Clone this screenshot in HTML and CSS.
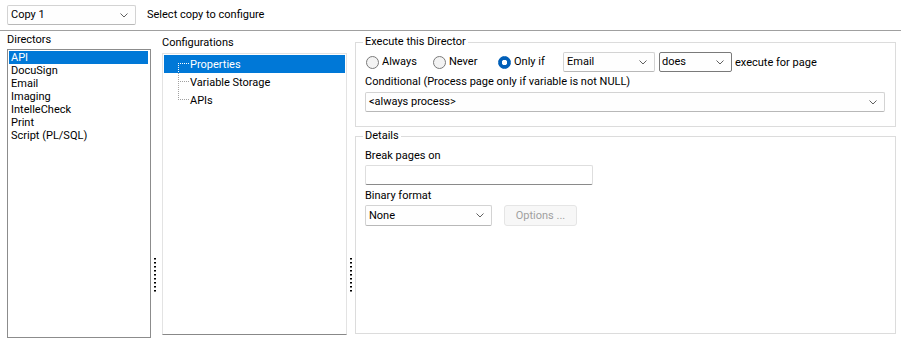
FILE: index.html
```html
<!DOCTYPE html>
<html lang="en">
<head>
    <meta charset="UTF-8">
    <title>Director Configuration</title>
    <link rel="stylesheet" href="styles.css">
</head>
<body>
    <!-- Copy selector -->
    <div class="toolbar">
        <div class="combo combo-copy">
            <span>Copy 1</span>
            <svg class="chevron" width="8" height="5" viewBox="0 0 8 5"><path d="M0.5 0.5 L4 4 L7.5 0.5"/></svg>
        </div>
        <span class="toolbar-label">Select copy to configure</span>
    </div>

    <div class="main">
        <!-- Directors list -->
        <div class="pane directors">
            <div class="pane-title">Directors</div>
            <ul class="listbox">
                <li class="selected">API</li>
                <li>DocuSign</li>
                <li>Email</li>
                <li>Imaging</li>
                <li>IntelleCheck</li>
                <li>Print</li>
                <li>Script (PL/SQL)</li>
            </ul>
        </div>
        <div class="splitter"><div class="grip"></div></div>

        <!-- Configurations tree -->
        <div class="pane configs">
            <div class="pane-title">Configurations</div>
            <ul class="tree">
                <li class="selected"><span class="branch first"></span><span>Properties</span></li>
                <li><span class="branch"></span><span>Variable Storage</span></li>
                <li><span class="branch last"></span><span>APIs</span></li>
            </ul>
        </div>
        <div class="splitter narrow"><div class="grip"></div></div>

        <!-- Settings -->
        <div class="pane settings">
            <fieldset class="group group-exec">
                <legend>Execute this Director</legend>
                <div class="exec-row">
                    <label class="radio"><span class="radio-dot"></span>Always</label>
                    <label class="radio"><span class="radio-dot"></span>Never</label>
                    <label class="radio"><span class="radio-dot checked"></span>Only if</label>
                    <div class="combo combo-var">
                        <span>Email</span>
                        <svg class="chevron" width="8" height="5" viewBox="0 0 8 5"><path d="M0.5 0.5 L4 4 L7.5 0.5"/></svg>
                    </div>
                    <div class="combo combo-does focused">
                        <span>does</span>
                        <svg class="chevron" width="8" height="5" viewBox="0 0 8 5"><path d="M0.5 0.5 L4 4 L7.5 0.5"/></svg>
                    </div>
                    <span class="after-text">execute for page</span>
                </div>
                <div class="field-label">Conditional (Process page only if variable is not NULL)</div>
                <div class="combo combo-wide">
                    <span>&lt;always process&gt;</span>
                    <svg class="chevron" width="8" height="5" viewBox="0 0 8 5"><path d="M0.5 0.5 L4 4 L7.5 0.5"/></svg>
                </div>
            </fieldset>

            <fieldset class="group group-details">
                <legend>Details</legend>
                <div class="field-label first">Break pages on</div>
                <div class="textbox"></div>
                <div class="field-label">Binary format</div>
                <div class="format-row">
                    <div class="combo combo-format">
                        <span>None</span>
                        <svg class="chevron" width="8" height="5" viewBox="0 0 8 5"><path d="M0.5 0.5 L4 4 L7.5 0.5"/></svg>
                    </div>
                    <button class="btn" disabled>Options ...</button>
                </div>
            </fieldset>
        </div>
    </div>
</body>
</html>
```

FILE: styles.css
```css
body {
    margin: 0;
    font-family: Roboto, "Noto Sans", sans-serif;
    font-size: 11px;
    color: #000;
    background-color: #fff;
    width: 901px;
    height: 341px;
    overflow: hidden;
}
ul {
    list-style: none;
    margin: 0;
    padding: 0;
}

/* top bar */
.toolbar {
    display: flex;
    align-items: center;
    height: 31px;
    padding: 0 0 0 7px;
    border-bottom: 1px solid #a0a0a0;
    box-sizing: border-box;
}
.toolbar-label {
    margin-left: 11px;
    line-height: 14px;
}

/* combo boxes */
.combo {
    display: flex;
    align-items: center;
    justify-content: space-between;
    height: 20px;
    box-sizing: border-box;
    padding: 0 7px 0 3px;
    border: 1px solid #d3d3d3;
    border-bottom-color: #b8b8b8;
    border-radius: 2px;
    background-color: #fefefe;
    line-height: 14px;
}
.combo.focused {
    border-color: #7a7a7a;
    padding-left: 2px;
}
.chevron path {
    fill: none;
    stroke: #606060;
    stroke-width: 1;
}
.combo-copy { width: 129px; }
.combo-var { width: 92px; }
.combo-does { width: 73px; margin-left: 4px; }
.combo-wide { width: 520px; margin-top: 3px; }
.combo-format { width: 127px; height: 21px; }

/* main area */
.main {
    display: flex;
    height: 310px;
}
.pane {
    display: flex;
    flex-direction: column;
    box-sizing: border-box;
}
.pane-title {
    line-height: 14px;
}
.directors {
    margin-left: 7px;
    width: 144px;
    padding-bottom: 3px;
}
.directors .pane-title {
    padding-top: 2px;
}
.listbox {
    flex: 1;
    margin-top: 2px;
    border: 1px solid #8c8c8c;
    padding: 1px;
}
.listbox li {
    height: 13px;
    line-height: 13px;
    padding-left: 2px;
    margin-right: 1px;
}
.listbox li.selected {
    background-color: #0078d7;
    color: #fff;
}

.splitter {
    width: 11px;
}
.splitter.narrow {
    width: 8px;
}
.grip {
    width: 2px;
    height: 35px;
    margin: 227px 0 0 3px;
    background-image: repeating-linear-gradient(to bottom, #000 0 1px, #777 1px 2px, transparent 2px 4px);
}

.configs {
    width: 185px;
    padding-bottom: 6px;
}
.configs .pane-title {
    padding-top: 5px;
}
.tree {
    flex: 1;
    margin-top: 3px;
    padding: 1px;
    border: 1px solid #e3e3e3;
    border-bottom-color: #888;
}
.tree li {
    display: flex;
    align-items: center;
    height: 18px;
    padding-left: 14px;
    color: #000;
}
.tree li.selected {
    background-color: #0078d7;
    color: #fff;
}
.branch {
    width: 11px;
    height: 18px;
    margin-right: 1px;
    color: #a0a0a0;
    background-repeat: no-repeat;
    background-image:
        repeating-linear-gradient(to right, currentColor 0 1px, transparent 1px 2px),
        repeating-linear-gradient(to bottom, currentColor 0 1px, transparent 1px 2px);
    background-size: 11px 1px, 1px 18px;
    background-position: 0 8px, 0 0;
}
.branch.first {
    background-size: 11px 1px, 1px 10px;
    background-position: 0 8px, 0 8px;
}
.branch.last {
    background-size: 11px 1px, 1px 9px;
    background-position: 0 8px, 0 0;
}
.tree li.selected .branch {
    color: #fff;
}

/* settings groups */
.settings {
    flex: 1;
    margin-right: 5px;
    padding-bottom: 7px;
}
.group {
    margin: 0;
    border: 1px solid #dcdcdc;
    min-width: 0;
}
.group legend {
    padding: 0 2px;
    margin-left: -2px;
    line-height: 14px;
}
.group-exec {
    margin-top: 4px;
    padding: 3px 10px 14px 9px;
}
.group-details {
    flex: 1;
    margin-top: 2px;
    padding: 6px 10px 0 9px;
}
.exec-row {
    display: flex;
    align-items: center;
    height: 20px;
}
.radio {
    display: flex;
    align-items: center;
    line-height: 14px;
}
.radio:first-child {
    margin-left: 1px;
    width: 67px;
}
.radio:nth-child(2),
.radio:nth-child(3) {
    width: 65px;
}
.radio-dot {
    width: 11px;
    height: 11px;
    margin-right: 3px;
    border: 1px solid #7a7a7a;
    border-radius: 50%;
    background-color: #f3f3f3;
}
.radio-dot.checked {
    border-color: #005fb8;
    background-color: #fff;
    background-image: radial-gradient(circle, #fff 0 2.5px, #005fb8 3px);
}
.after-text {
    margin-left: 3px;
}
.field-label {
    margin-top: 3px;
    line-height: 14px;
}
.group-details .field-label {
    margin-top: 4px;
}
.group-details .field-label.first {
    margin-top: 0;
}
.textbox {
    width: 228px;
    height: 20px;
    margin-top: 2px;
    box-sizing: border-box;
    border: 1px solid #dedede;
    border-bottom-color: #8a8a8a;
    border-radius: 2px;
}
.format-row {
    display: flex;
    align-items: center;
    margin-top: 2px;
}
.btn {
    width: 73px;
    height: 21px;
    margin-left: 12px;
    padding: 0;
    font-family: inherit;
    font-size: 11px;
    color: #a0a0a0;
    background-color: #f7f7f7;
    border: 1px solid #e5e5e5;
    border-radius: 3px;
}
```
